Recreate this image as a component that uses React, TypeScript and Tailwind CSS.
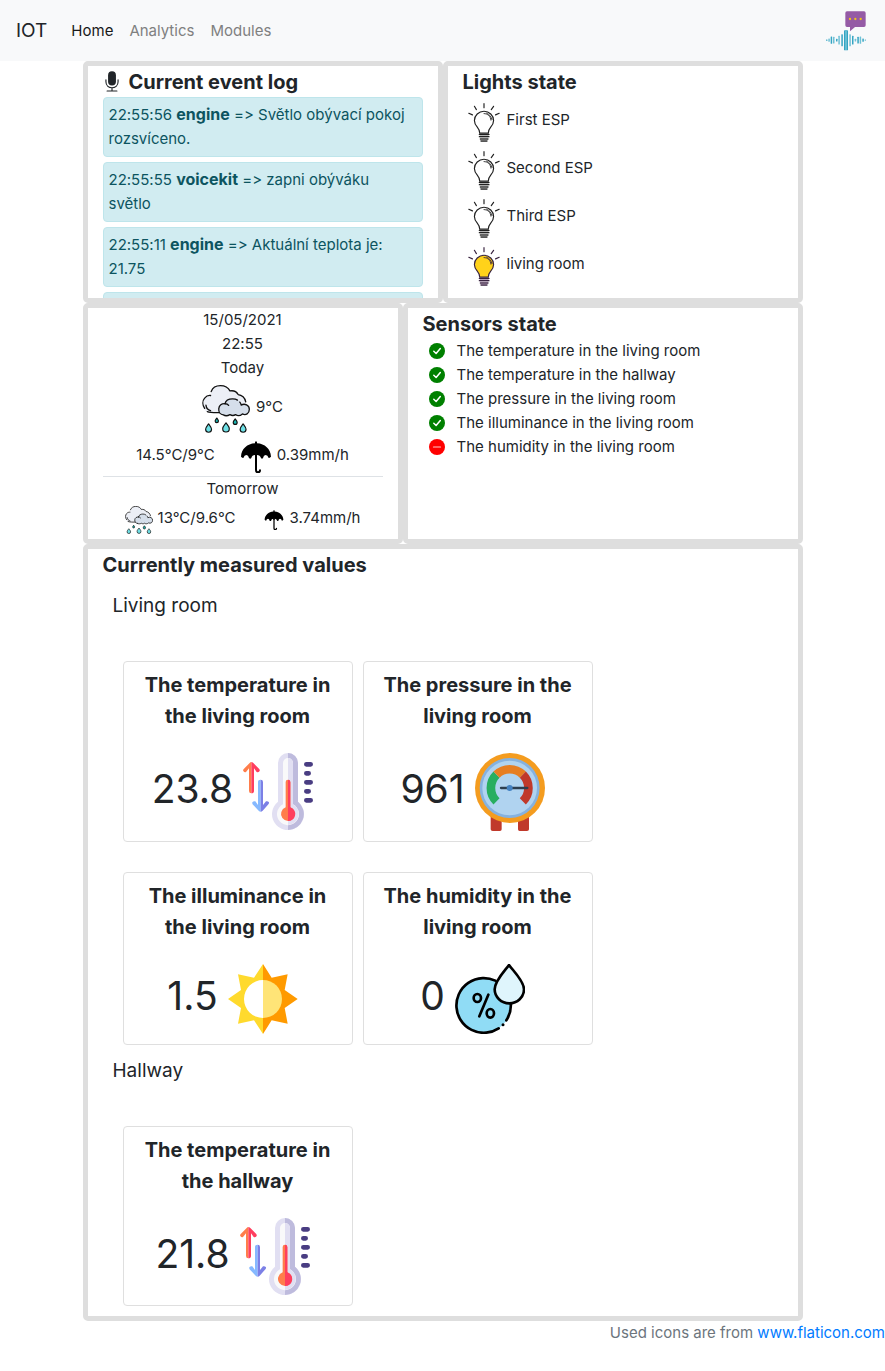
import type { ReactNode } from "react";

function LogoIcon() {
  const bars = [
    [80, 4, 0], [87, 10, 1], [94, 22, 0], [101, 20, 1], [110, 8, 0], [117, 26, 1], [126, 36, 0],
    [150, 36, 1], [158, 26, 0], [166, 8, 1], [174, 20, 0], [181, 22, 1], [189, 10, 0], [196, 4, 1],
  ];
  return (
    <svg viewBox="78 32 120 120" className="size-10" role="img" aria-label="Voice assistant">
      <path d="M141 33h51q5 0 5 5v37q0 5-5 5h-27l-15 13v-13h-9q-5 0-5-5v-37q0-5 5-5z" fill="#955ba5" />
      <circle cx="150" cy="56" r="3.5" fill="#f0c419" />
      <circle cx="166" cy="56" r="3.5" fill="#f0c419" />
      <circle cx="182" cy="56" r="3.5" fill="#f0c419" />
      {bars.map(([x, h, light]) => (
        <rect key={x} x={x - 2} y={119.5 - h / 2} width="4.5" height={h} rx="1.5" fill={light ? "#6fc1d6" : "#35a5c3"} />
      ))}
      <rect x="132" y="90" width="12" height="60" rx="2" fill="#35a5c3" />
      <rect x="136" y="91" width="4" height="58" fill="#7fcbdc" />
    </svg>
  );
}

function MicIcon() {
  return (
    <svg viewBox="0 0 42 64" className="h-[21px] w-[14px] shrink-0" aria-hidden="true">
      <rect x="9" y="1" width="24" height="43" rx="12" fill="#212529" />
      <path d="M2.500 27v6c0 24 37 24 37 0v-6M21 51v10M6 61h30" fill="none" stroke="#212529" strokeWidth="3.500" strokeLinecap="round" />
    </svg>
  );
}

function BulbIcon({ on }: { on: boolean }) {
  const ink = on ? "#37223f" : "#202020";
  return (
    <svg viewBox="84 141 96 118" className="h-[39px] w-8 shrink-0" role="img" aria-label={on ? "On" : "Off"}>
      <g fill="none" stroke={ink} strokeWidth="3" strokeLinecap="round">
        <path d="M132 143v12M103 151l6 10M161 151l-7 10M86 172l11 5M178 172l-11 5" strokeWidth="3.500" />
        <path
          d="M119 232C119 214 103 213 103 194a29 28 0 0 1 58 0C161 213 145 214 145 232z"
          fill={on ? "#ffd21a" : "#fff"}
          strokeWidth="3.500"
        />
        <path d="M132 173c11 0 20 8 21 20M140 172c9 4 14 10 16 19" strokeWidth="2.500" />
        <path d="M118 236h29M118 243h29M121 250h23M123 256h18" strokeWidth="4" />
        <path d="M120 239.500h25M121 246.500h23M123 253h18" stroke={on ? "#8a6b91" : "#8a8a8a"} strokeWidth="2" />
      </g>
    </svg>
  );
}

function Drop({ x, y, r, fill }: { x: number; y: number; r: number; fill: string }) {
  return (
    <path
      d={`M${x} ${y - r * 1.5}C${x + r * 0.5} ${y - r * 0.8} ${x + r} ${y - r * 0.4} ${x + r} ${y + r * 0.3}a${r} ${r} 0 0 1 ${-2 * r} 0C${x - r} ${y - r * 0.4} ${x - r * 0.5} ${y - r * 0.8} ${x} ${y - r * 1.5}z`}
      fill={fill}
      stroke="#111"
      strokeWidth="3.500"
      strokeLinejoin="round"
    />
  );
}

function RainIcon({ className }: { className: string }) {
  return (
    <svg viewBox="41 29 146 146" className={className} role="img" aria-label="Rain">
      <g stroke="#111" strokeWidth="4" strokeLinejoin="round" strokeLinecap="round">
        <path d="M62 113C48 108 42 96 44 83C46 70 56 62 68 61C65 43 80 31 97 31C111 31 121 37 126 47C137 45 146 49 151 58C163 59 174 70 174 83L150 112z" fill="#eceff6" stroke="none" />
        <path d="M49 100C42 90 42 77 49 69C54 63 61 60 67 61M69 49C73 38 84 31 97 31C111 31 121 37 126 47C137 45 146 49 151 58C162 59 172 68 174 80M57 110C68 114 84 113 97 113M53 90C54 99 59 105 67 107" fill="none" />
        <path d="M106 120C97 119 91 111 92 101C93 91 101 85 111 86C113 76 123 71 134 71C148 71 158 78 160 90C171 84 185 90 185 103C185 116 174 122 164 117C156 124 147 122 143 119C137 123 131 122 126 119C119 123 111 123 106 120z" fill="#d5deea" stroke="none" />
        <path d="M106 120C97 119 91 111 92 101C93 91 101 85 111 86M111 86C113 76 123 71 134 71C140 71 145 72 149 75M156 81Q160 86 160 90C171 84 185 90 185 103C185 116 174 122 164 117C156 124 147 122 143 119C137 123 131 122 126 119C119 123 111 123 106 120" fill="none" />
        <path d="M111 86C116 86 120 88 122 91" fill="none" />
      </g>
      <Drop x={86} y={137} r={5} fill="#18b5b2" />
      <Drop x={142} y={141} r={6} fill="#18b5b2" />
      <Drop x={61} y={161} r={9} fill="#6ee0e6" />
      <Drop x={114} y={159} r={10} fill="#6ee0e6" />
      <Drop x={166} y={161} r={9} fill="#6ee0e6" />
    </svg>
  );
}

function UmbrellaIcon({ className }: { className: string }) {
  return (
    <svg viewBox="153 198 90 96" className={className} role="img" aria-label="Precipitation">
      <path d="M195 205v-4q3-5 6 0v4C224 206 242 222 243 245Q239 249 236 249Q233 240 227 240Q221 240 219 249Q216 253 213 249Q210 240 201 240V246H195V240Q186 240 184 249Q181 253 177 249Q175 240 169 240Q163 240 160 249Q157 249 153 245C154 222 172 206 195 205z" />
      <path d="M198 236v49q0 7 6 7t6-6" fill="none" stroke="#000" strokeWidth="6" strokeLinecap="round" />
    </svg>
  );
}

function ThermometerIcon() {
  return (
    <svg viewBox="36 39 210 231" className="h-[77px] w-[70px] shrink-0" aria-hidden="true">
      <path d="M171 39a30 30 0 0 0-30 30V185A48 48 0 1 0 201 185V69a30 30 0 0 0-30-30z" fill="#e1dff2" />
      <path d="M171 39a30 30 0 0 1 30 30V185A48 48 0 0 1 171 270z" fill="#bebbdd" />
      <path d="M171 54a15 15 0 0 0-15 15V193A33 33 0 1 0 186 193V69a15 15 0 0 0-15-15z" fill="#f9f9fa" />
      <path d="M171 54a15 15 0 0 1 15 15V193A33 33 0 0 1 171 255z" fill="#e1dff2" />
      <path d="M171 119q-7 0-7 7V202a21 21 0 1 0 14 0V126q0-7-7-7z" fill="#ff7d4b" />
      <path d="M171 119q7 0 7 7V202a21 21 0 0 1-7 41z" fill="#ff3e5e" />
      <path d="M61 66v94q-7 0-7-7V85L45 96q-5 2-8-3q-2-4 2-7L56 69q2-3 5-3z" fill="#ff7d4b" />
      <path d="M61 66v94q8 0 8-7V85L77 96q5 2 9-3q1-4-2-7L67 69q-3-3-6-3z" fill="#ff3e5e" />
      <path d="M89 215V119q-8 0-8 7V195L73 184q-5-2-9 3q-1 4 2 7L83 212q3 3 6 3z" fill="#86b9ff" />
      <path d="M89 215V119q7 0 7 7V195L105 184q5-2 9 3q1 4-3 7L95 212q-3 3-6 3z" fill="#7c80e6" />
      <path d="M226 73h13M226 100h7M226 127h13M226 154h7M226 181h13" stroke="#493d82" strokeWidth="14" strokeLinecap="round" />
    </svg>
  );
}

function GaugeIcon() {
  return (
    <svg viewBox="51 39 210 234" className="h-[78px] w-[70px] shrink-0" aria-hidden="true">
      <path d="M98 225h33v43q0 5-5 5h-22q-6 0-6-5zM180 225h33v43q0 5-6 5h-22q-5 0-5-5z" fill="#c0392b" />
      <circle cx="156" cy="144" r="105" fill="#f49c1f" />
      <circle cx="155" cy="144" r="90" fill="#85b2e0" />
      <circle cx="155" cy="144" r="82" fill="#b0d3f0" />
      <g fill="none" strokeWidth="26">
        <path d="M115.500 184A56 56 0 0 1 115.500 104" stroke="#27ae60" />
        <path d="M115.500 104A56 56 0 0 1 194.500 104" stroke="#e67e22" />
        <path d="M194.500 104A56 56 0 0 1 194.500 184" stroke="#c0392b" />
      </g>
      <path d="M129 144h79" stroke="#2c3e50" strokeWidth="7" strokeLinecap="round" />
      <circle cx="155" cy="144" r="9" fill="#4482c3" />
    </svg>
  );
}

function SunIcon() {
  return (
    <svg viewBox="40 42 210 210" className="size-[70px] shrink-0" aria-hidden="true">
      <path d="M145 42L118 83L70 73L79 120L40 147L79 174L70 221L118 211L145 252z" fill="#ffda2d" />
      <path d="M145 42L171 83L219 73L210 120L249 147L210 174L219 221L171 211L145 252z" fill="#ff9a00" />
      <path d="M145 90a57 57 0 0 0 0 114z" fill="#fff" />
      <path d="M145 90a57 57 0 0 1 0 114z" fill="#ffe477" />
    </svg>
  );
}

function HumidityIcon() {
  return (
    <svg viewBox="45 42 210 210" className="size-[70px] shrink-0" aria-hidden="true">
      <circle cx="131" cy="166" r="82" fill="#90dcf5" />
      <path d="M176 235A82 82 0 1 1 166 92M212 157A82 82 0 0 1 199 211" fill="none" stroke="#000" strokeWidth="8" strokeLinecap="round" />
      <circle cx="189" cy="224" r="4.500" />
      <path d="M207 45C193 64 164 93 164 118a44 42 0 0 0 88 0C252 93 221 64 207 45z" fill="#dff5fc" stroke="#000" strokeWidth="8" strokeLinejoin="round" />
      <g fill="none" stroke="#000" strokeWidth="8" strokeLinecap="round">
        <ellipse cx="112" cy="144" rx="11" ry="12" />
        <ellipse cx="151" cy="190" rx="11" ry="13" />
        <path d="M145 134L118 199" />
      </g>
    </svg>
  );
}

function StatusIcon({ ok }: { ok: boolean }) {
  return (
    <svg viewBox="0 0 16 16" className="size-4 shrink-0" role="img" aria-label={ok ? "Available" : "Unavailable"}>
      <circle cx="8" cy="8" r="8" fill={ok ? "#008000" : "#ff0000"} />
      <path
        d={ok ? "M4.800 8.300L7.100 10.500L11.300 5.500" : "M4.500 8h7"}
        fill="none"
        stroke={ok ? "#fff" : "#ffc9c9"}
        strokeWidth={ok ? 1.5 : 1.2}
        strokeLinecap="round"
        strokeLinejoin="round"
      />
    </svg>
  );
}

function Panel({ className = "", children }: { className?: string; children: ReactNode }) {
  return <section className={`overflow-hidden rounded-[5px] border-[5px] border-[#dedede] px-[15px] ${className}`}>{children}</section>;
}

function PanelTitle({ children }: { children: ReactNode }) {
  return <h2 className="flex h-[31px] items-center gap-2 text-xl font-bold">{children}</h2>;
}

function SensorCard({ title, value, icon, className }: { title: string; value: string; icon: ReactNode; className: string }) {
  return (
    <article className={`w-[230px] rounded border border-[#dfdfdf] px-4 pt-2 text-center ${className}`}>
      <h4 className="text-xl leading-[31px] font-bold">{title}</h4>
      <div className="mt-[21px] mr-[10px] flex items-center justify-center gap-[10px]">
        <span className="pb-[6px] text-[39px] leading-[60px]">{value}</span>
        {icon}
      </div>
    </article>
  );
}

const events = [
  { time: "22:55:56", source: "engine", text: "Světlo obývací pokoj rozsvíceno." },
  { time: "22:55:55", source: "voicekit", text: "zapni obýváku světlo" },
  { time: "22:55:11", source: "engine", text: "Aktuální teplota je: 21.75" },
];

const lights = [
  { name: "First ESP", on: false },
  { name: "Second ESP", on: false },
  { name: "Third ESP", on: false },
  { name: "living room", on: true },
];

const sensors = [
  { name: "The temperature in the living room", ok: true },
  { name: "The temperature in the hallway", ok: true },
  { name: "The pressure in the living room", ok: true },
  { name: "The illuminance in the living room", ok: true },
  { name: "The humidity in the living room", ok: false },
];

export default function App() {
  return (
    <div className="bg-white font-['Inter',sans-serif] text-[15px] leading-6 text-[#212529] [font-feature-settings:'calt'_0]">
      <nav className="flex h-[61px] items-center bg-[#f8f9fa] pr-[19px] pl-4">
        <a href="#" className="mr-6 text-[19px]">IOT</a>
        <div className="flex flex-1 gap-4 text-[#7f8080]">
          <a href="#home" className="text-[#191919]">Home</a>
          <a href="#analytics">Analytics</a>
          <a href="#modules">Modules</a>
        </div>
        <LogoIcon />
      </nav>

      <main className="mx-auto max-w-[720px]">
        <div className="grid grid-cols-2">
          <Panel className="h-[242px]">
            <PanelTitle>
              <span className="flex w-[18px] justify-center"><MicIcon /></span>
              Current event log
            </PanelTitle>
            <ul className="flex flex-col gap-[5px]">
              {events.map((e) => (
                <li key={e.time} className="rounded border border-[#bee5eb] bg-[#d1ecf1] py-[5px] pr-[10px] pl-[5px] text-[#0c5460]">
                  {e.time} <b className="text-base leading-none">{e.source}</b> =&gt; {e.text}
                </li>
              ))}
              <li className="h-[60px] rounded border border-[#bee5eb] bg-[#d1ecf1]" />
            </ul>
          </Panel>
          <Panel className="h-[242px]">
            <PanelTitle>Lights state</PanelTitle>
            <ul className="pt-px pl-[5px]">
              {lights.map((l) => (
                <li key={l.name} className="flex h-12 items-center gap-[7px]">
                  <BulbIcon on={l.on} />
                  <span className="pb-1">{l.name}</span>
                </li>
              ))}
            </ul>
          </Panel>
        </div>

        <div className="grid grid-cols-[4fr_5fr]">
          <Panel className="h-[241px] text-center">
            <p>15/05/2021</p>
            <p>22:55</p>
            <p>Today</p>
            <div className="flex h-[58px] items-center justify-center gap-[6px]">
              <RainIcon className="size-12" />
              <span className="pb-1">9°C</span>
            </div>
            <div className="flex h-[39px] items-center justify-center gap-[26px] border-b border-[#dee2e6] pb-1">
              <span>14.5°C/9°C</span>
              <span className="flex items-center gap-[6px]">
                <UmbrellaIcon className="mt-1 h-8 w-[30px]" />
                0.39mm/h
              </span>
            </div>
            <p>Tomorrow</p>
            <div className="flex h-[34px] items-center justify-center gap-7">
              <span className="flex items-center gap-[5px]">
                <RainIcon className="mt-1 size-7" />
                13°C/9.6°C
              </span>
              <span className="flex items-center gap-[6px]">
                <UmbrellaIcon className="mt-1 size-5" />
                3.74mm/h
              </span>
            </div>
          </Panel>
          <Panel className="h-[241px]">
            <PanelTitle>Sensors state</PanelTitle>
            <ul className="pl-[6px]">
              {sensors.map((s) => (
                <li key={s.name} className="flex items-center gap-3">
                  <StatusIcon ok={s.ok} />
                  {s.name}
                </li>
              ))}
            </ul>
          </Panel>
        </div>

        <Panel className="pb-[10px]">
          <PanelTitle>Currently measured values</PanelTitle>
          <div className="px-[10px] pt-2">
            <h3 className="text-[19px] leading-9">Living room</h3>
            <div className="flex flex-wrap gap-x-[10px] gap-y-[30px] px-[10px] pt-[37px]">
              <SensorCard className="h-[181px]" title="The temperature in the living room" value="23.8" icon={<ThermometerIcon />} />
              <SensorCard className="h-[181px]" title="The pressure in the living room" value="961" icon={<GaugeIcon />} />
              <SensorCard className="h-[173px]" title="The illuminance in the living room" value="1.5" icon={<SunIcon />} />
              <SensorCard className="h-[173px]" title="The humidity in the living room" value="0" icon={<HumidityIcon />} />
            </div>
            <h3 className="mt-2 text-[19px] leading-9">Hallway</h3>
            <div className="flex flex-wrap gap-x-[10px] gap-y-[30px] px-[10px] pt-[37px]">
              <SensorCard className="h-[180px]" title="The temperature in the hallway" value="21.8" icon={<ThermometerIcon />} />
            </div>
          </div>
        </Panel>
      </main>

      <footer className="text-right text-[#6c757d]">
        Used icons are from <a href="https://www.flaticon.com" className="text-[#007bff]">www.flaticon.com</a>
      </footer>
    </div>
  );
}
